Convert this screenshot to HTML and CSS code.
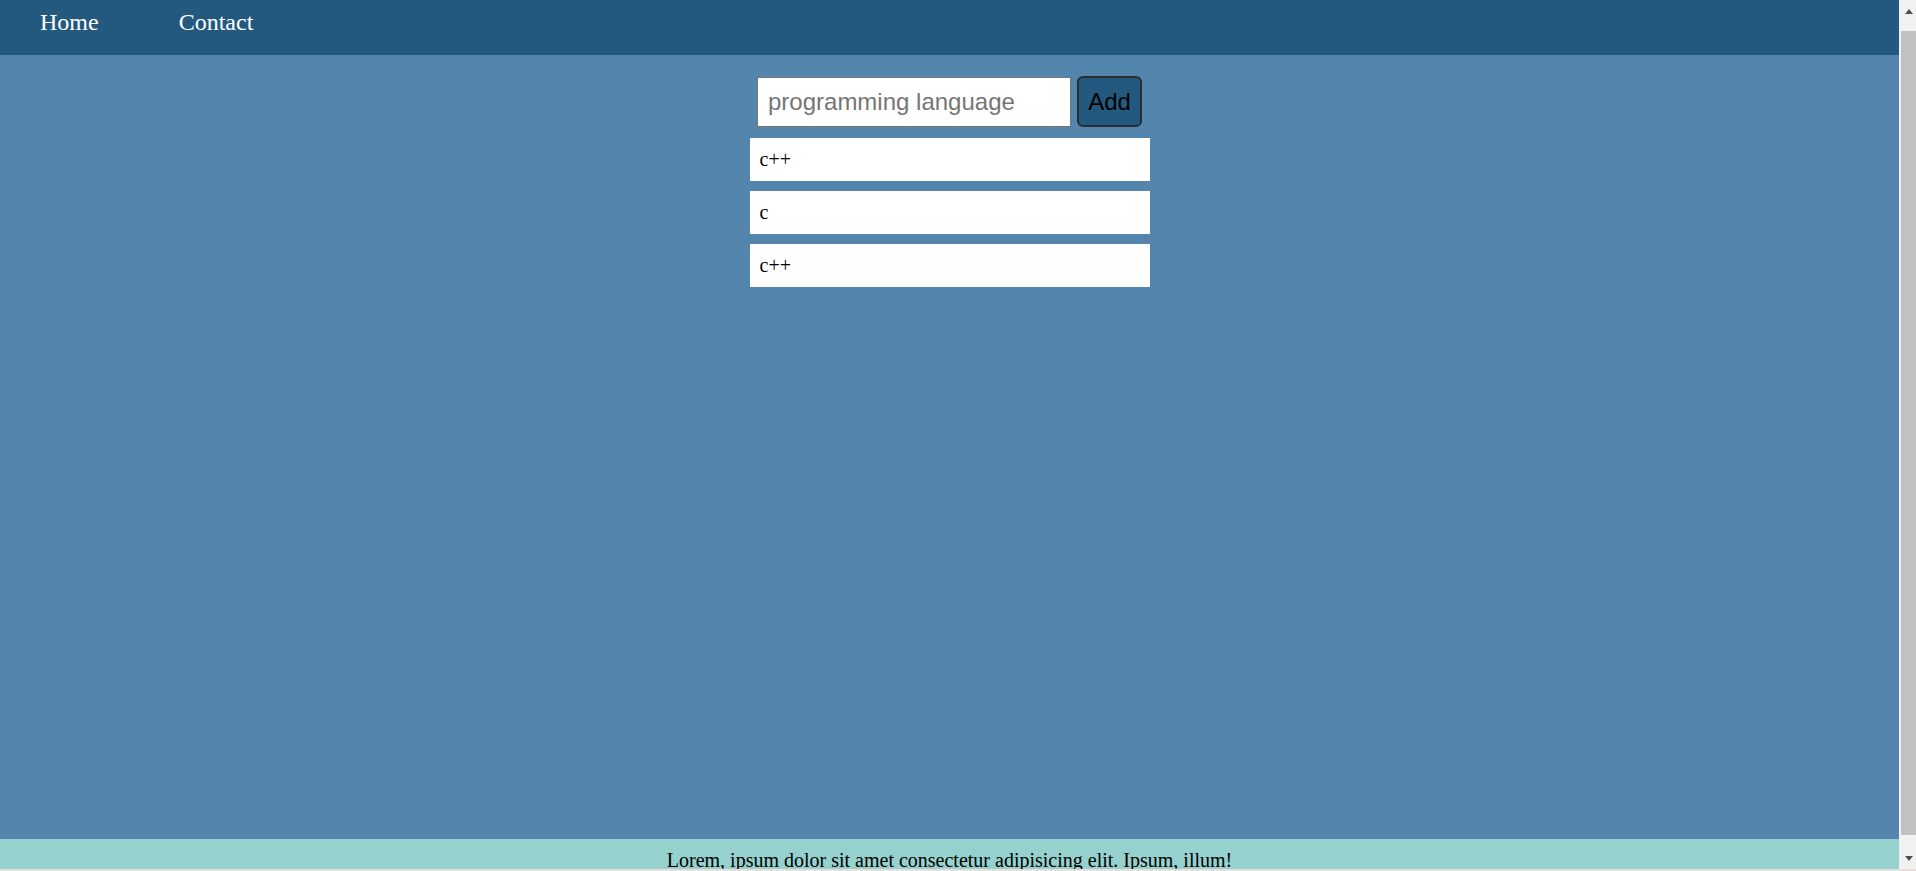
FILE: index.html
```html
<!DOCTYPE html>
<html lang="en">
<head>
<meta charset="utf-8">
<title>Languages</title>
<link rel="stylesheet" href="styles.css">
</head>
<body>
  <div class="viewport">
    <div class="page">
      <nav class="nav">
        <a class="nav-link" href="#">Home</a>
        <a class="nav-link" href="#">Contact</a>
      </nav>
      <main class="main">
        <form class="add-form">
          <input class="add-input" type="text" placeholder="programming language">
          <button class="add-btn" type="button">Add</button>
        </form>
        <ul class="list">
          <li class="item">c++</li>
          <li class="item">c</li>
          <li class="item">c++</li>
        </ul>
      </main>
      <footer class="footer">Lorem, ipsum dolor sit amet consectetur adipisicing elit. Ipsum, illum!</footer>
    </div>
    <div class="scrollbar">
      <div class="sb-btn sb-up"><span class="tri-up"></span></div>
      <div class="sb-thumb"></div>
      <div class="sb-btn sb-down"><span class="tri-down"></span></div>
    </div>
  </div>
  <div class="edge"></div>
</body>
</html>
```
FILE: styles.css
```css
html, body {
  margin: 0;
  padding: 0;
}
body {
  height: 100vh;
  overflow: hidden;
  display: flex;
  flex-direction: column;
  background: #5485ad;
  font-family: "Liberation Serif", "Times New Roman", serif;
  font-size: 20px;
  color: #000;
}
.viewport {
  height: 869px;
  display: flex;
  flex-direction: row;
  overflow: hidden;
}
.page {
  flex: 1;
  min-width: 0;
  overflow: hidden;
  background: #5485ad;
}
.nav {
  background: #23597f;
  height: 55px;
  box-sizing: border-box;
  padding-top: 8px;
  display: flex;
}
.nav-link {
  color: #fff;
  text-decoration: none;
  font-size: 24px;
  line-height: 28px;
  padding: 0 40px;
}
.main {
  min-height: 784px;
  box-sizing: border-box;
  padding-top: 21px;
  display: flex;
  flex-direction: column;
  align-items: center;
}
.add-form {
  display: flex;
  align-items: center;
  gap: 6px;
  margin: 0;
}
.add-input {
  width: 314px;
  height: 50px;
  box-sizing: border-box;
  border: 1px solid #767676;
  padding: 0 10px;
  font-family: "Liberation Sans", Arial, sans-serif;
  font-size: 24px;
  color: #000;
  background: #fff;
  outline: none;
}
.add-input::placeholder {
  color: #757575;
}
.add-btn {
  width: 65px;
  height: 51px;
  box-sizing: border-box;
  border: 2px solid #262d33;
  border-radius: 6px;
  background: #23597f;
  color: #000;
  font-family: "Liberation Sans", Arial, sans-serif;
  font-size: 24px;
  padding: 0;
}
.list {
  list-style: none;
  margin: 11px 0 0;
  padding: 0;
  width: 400px;
}
.item {
  background: #fff;
  height: 43px;
  box-sizing: border-box;
  padding: 10px 10px;
  line-height: 23px;
  margin-bottom: 10px;
}
.footer {
  background: #95d1cd;
  height: 68px;
  box-sizing: border-box;
  padding-top: 10px;
  line-height: 23px;
  text-align: center;
}
.scrollbar {
  width: 17px;
  flex: 0 0 17px;
  background: #f1f1f1;
  display: flex;
  flex-direction: column;
}
.sb-btn {
  display: flex;
  justify-content: center;
  padding-left: 2px;
}
.sb-up {
  height: 31px;
  align-items: flex-start;
  padding-top: 9px;
  box-sizing: border-box;
}
.sb-down {
  height: 34px;
  align-items: flex-start;
  padding-top: 21px;
  box-sizing: border-box;
}
.tri-up {
  width: 0;
  height: 0;
  border-left: 4.5px solid transparent;
  border-right: 4.5px solid transparent;
  border-bottom: 5px solid #505050;
}
.tri-down {
  width: 0;
  height: 0;
  border-left: 4.5px solid transparent;
  border-right: 4.5px solid transparent;
  border-top: 5px solid #505050;
}
.sb-thumb {
  flex: 1;
  margin-left: 2px;
  background: #c1c1c1;
}
.edge {
  height: 2px;
  background: #e6dfdb;
}
```
